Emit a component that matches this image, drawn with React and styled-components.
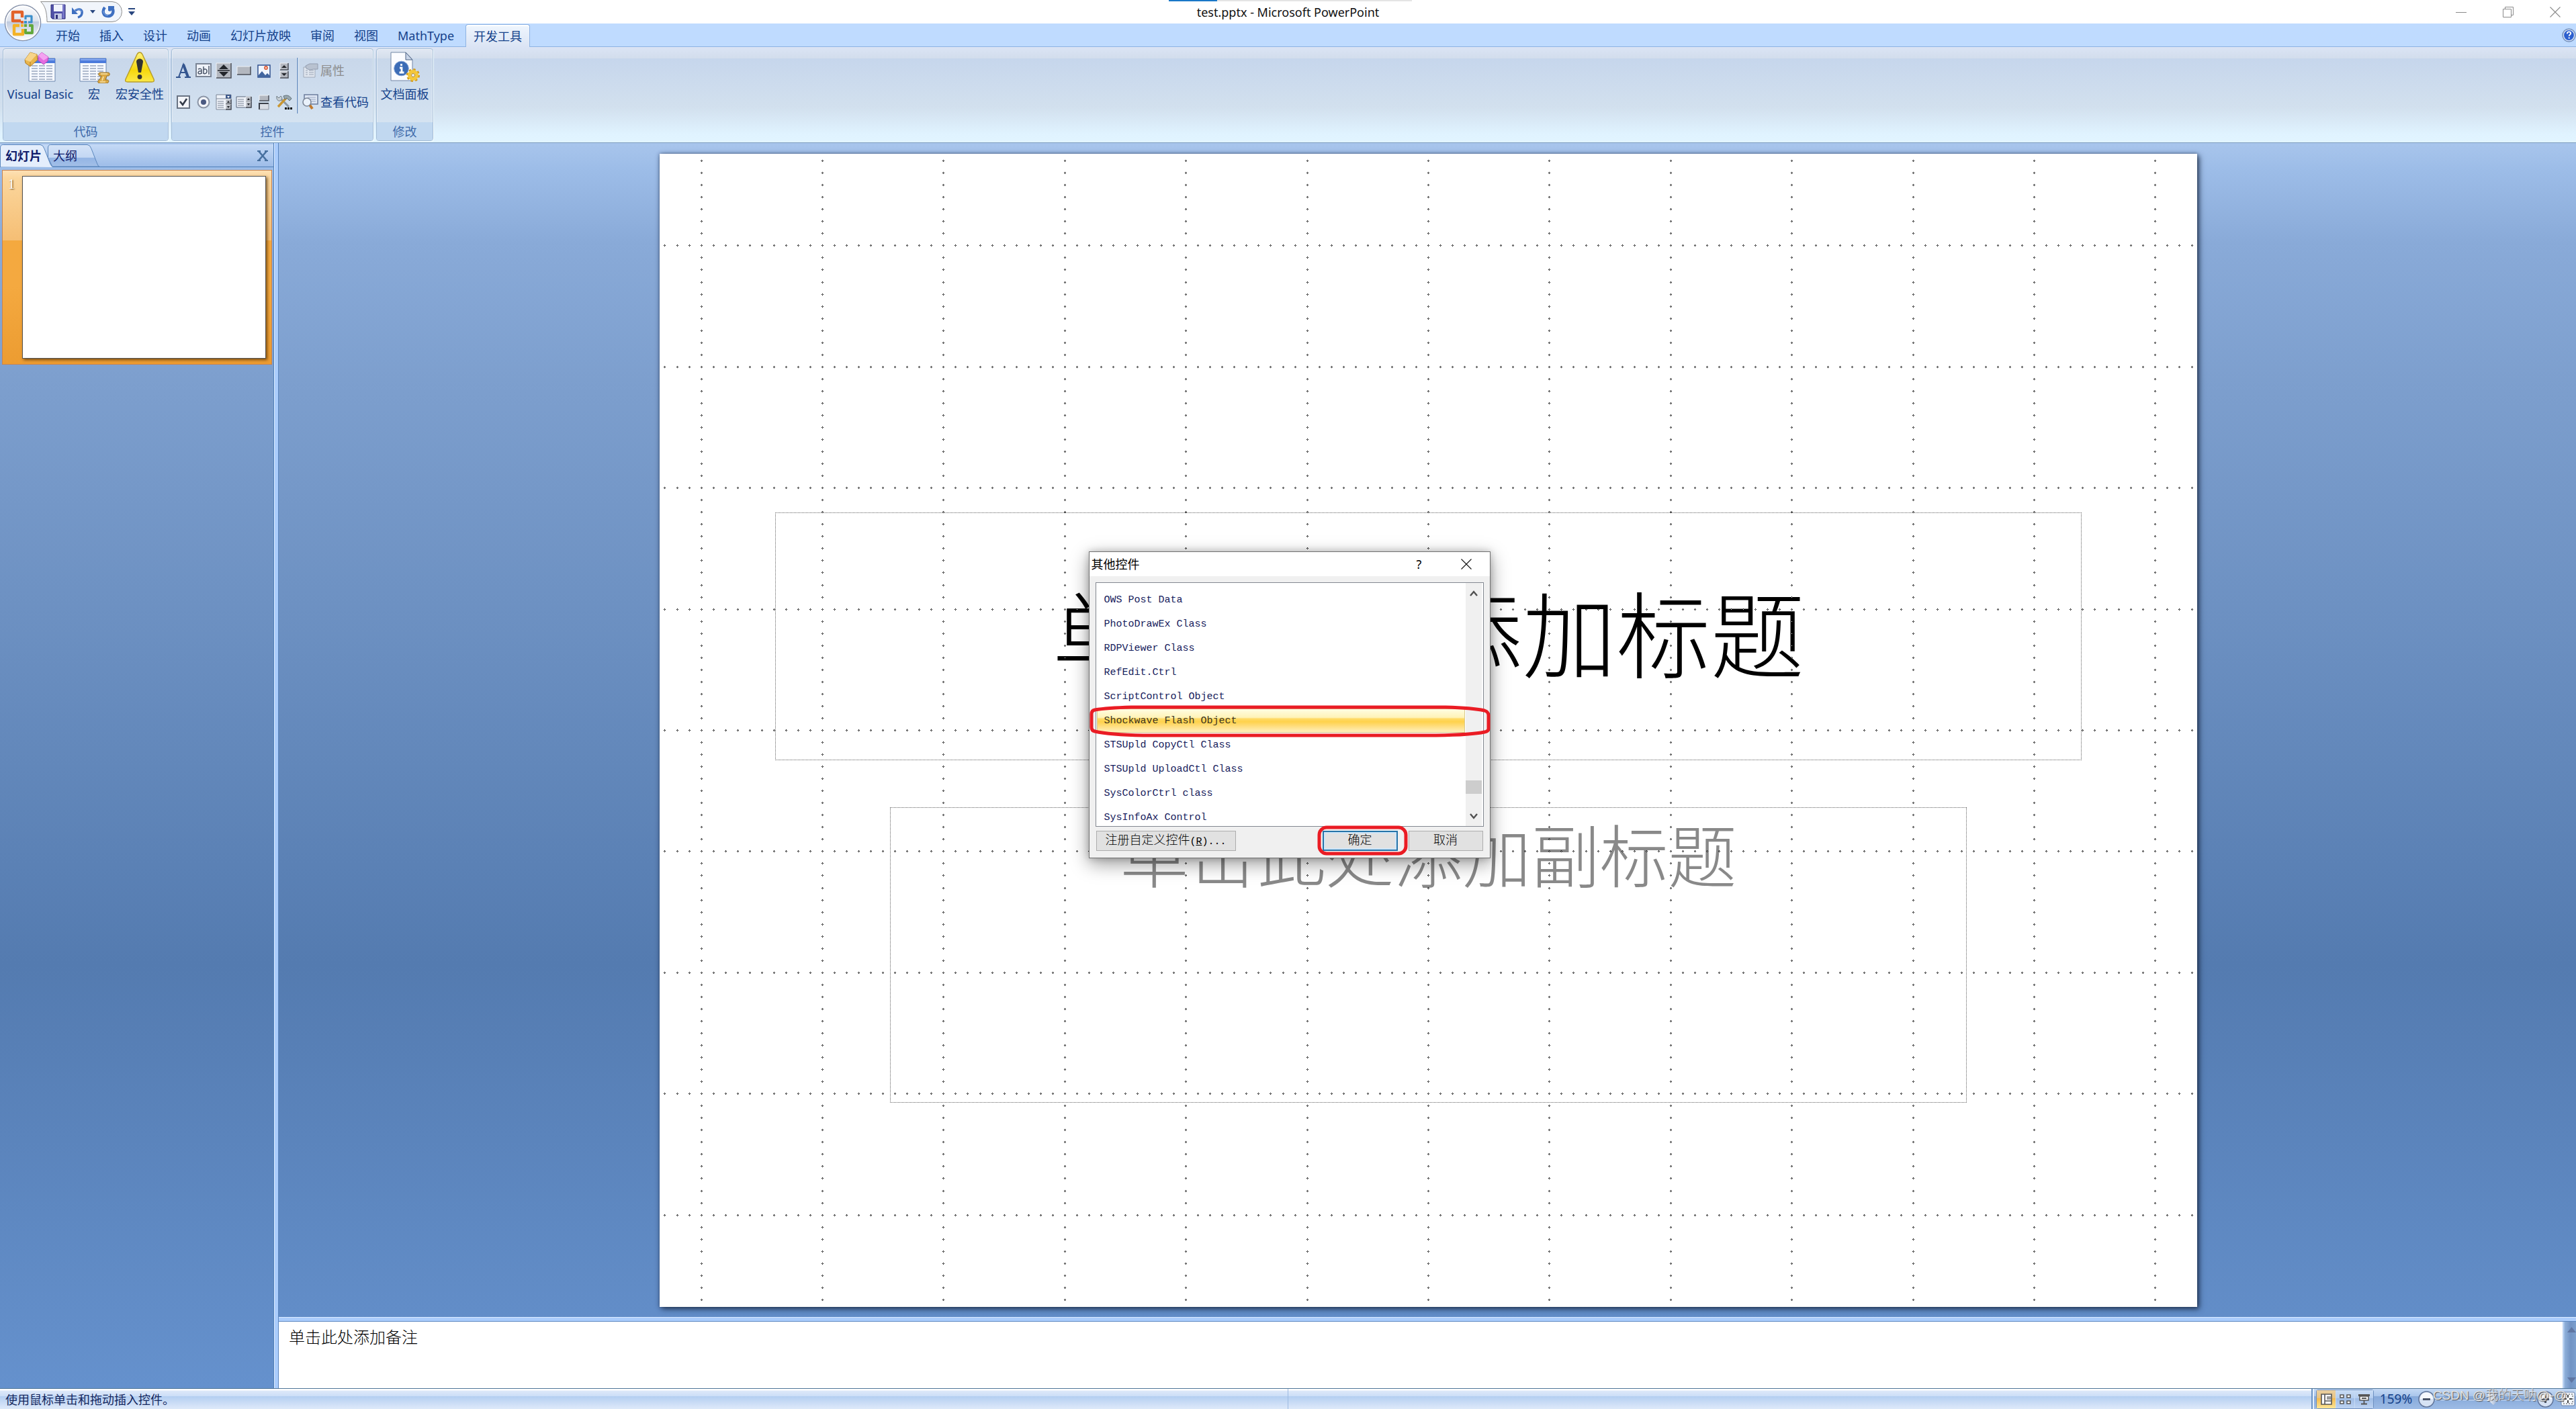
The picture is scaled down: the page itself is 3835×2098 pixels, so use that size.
import styled, { createGlobalStyle, css } from "styled-components";

const uiFont = `"Noto Sans", "Noto Sans CJK SC", sans-serif`;
const songFont = `"Liberation Serif", "Noto Sans CJK SC", serif`;
const monoFont = `"Liberation Mono", "Noto Sans CJK SC", monospace`;

const GlobalStyle = createGlobalStyle`
   * {
      box-sizing: border-box;
   }
   body {
      margin: 0;
      font-family: ${uiFont};
      font-size: 18px;
      line-height: 24px;
      color: #15428b;
      background: #fff;
   }
   button {
      font: inherit;
      color: inherit;
      border: 0;
      padding: 0;
      background: none;
   }
   svg {
      display: block;
      flex: none;
   }
`;

const Window = styled.div`
   position: relative;
   min-height: 100vh;
   display: flex;
   flex-direction: column;
   overflow: hidden;
`;

/* ---------- title bar ---------- */

const TitleBar = styled.header`
   height: 35px;
   display: grid;
   grid-template-columns: 1fr auto 1fr;
   align-items: center;
   color: #111;
`;

const QuickAccess = styled.div`
   margin-left: 60px;
   display: flex;
   align-items: center;
   gap: 9px;
`;

const QuickTools = styled.div`
   position: relative;
   width: 122px;
   height: 31px;
   padding-left: 15px;
   display: flex;
   align-items: center;
   gap: 9px;
`;

const QuickShape = styled.svg`
   position: absolute;
   left: 0;
   top: 0;
`;

const IconButton = styled.button`
   position: relative;
   display: flex;
   align-items: center;
   justify-content: center;
`;

const AppTitle = styled.h1`
   margin: 0;
   font-size: 18px;
   font-weight: 400;
   line-height: 34px;
`;

const WindowButtons = styled.div`
   display: flex;
   justify-content: flex-end;
   gap: 54px;
   padding-right: 23px;
`;

const LoadStrip = styled.div`
   position: absolute;
   top: 0;
   left: calc(50% - 178px);
   width: 362px;
   height: 2px;
   background: linear-gradient(90deg, #1a78c8 72px, #e4e4e4 72px);
`;

const OfficeButton = styled.button`
   position: absolute;
   left: 6px;
   top: 6px;
   z-index: 2;
`;

/* ---------- ribbon ---------- */

const TabStrip = styled.nav`
   height: 35px;
   padding: 1px 0 0 71px;
   display: flex;
   gap: 5px;
   background: #bfdbff;
   border-bottom: 1px solid #8db2e3;
`;

const RibbonTab = styled.button`
   height: 34px;
   padding: 0 12px;
   line-height: 32px;
   ${(p) =>
      p.$active &&
      css`
         background: linear-gradient(#eff6fe, #dbe4f4);
         border: 1px solid #8db2e3;
         border-bottom: 0;
         border-radius: 4px 4px 0 0;
         padding: 0 11px;
         box-shadow: inset 0 2px 1px #fff;
         line-height: 30px;
      `}
`;

const HelpButton = styled(IconButton)`
   margin-left: auto;
`;

const Ribbon = styled.section`
   height: 143px;
   padding: 2px 4px;
   display: flex;
   gap: 4px;
   background: linear-gradient(#dbe4f5, #d2ddec 17px, #c6d6ec 17px, #d2e0ee 90px, #e0f3ff 130px, #e2f5ff);
   border-bottom: 1px solid #7e9cbd;
`;

const Group = styled.section`
   display: flex;
   flex-direction: column;
   width: ${(p) => p.$width}px;
   height: 138px;
   border: 1px solid #a3bcd6;
   border-radius: 4px;
   box-shadow: inset 0 0 0 1px rgba(255, 255, 255, 0.45), 1px 1px 0 #f2fbff;
   background: linear-gradient(#e1e8f3, #d4deeb 14px, #c8d7ea 14px, #d8e6f3);
   overflow: hidden;
`;

const GroupBody = styled.div`
   flex: 1;
   display: flex;
   padding-left: ${(p) => p.$indent || 0}px;
`;

const GroupLabel = styled.h2`
   margin: 0;
   height: 27px;
   font-size: 18px;
   font-weight: 400;
   line-height: 28px;
   text-align: center;
   color: #3e6aaa;
   background: #c1d8f0;
`;

const BigButton = styled.button`
   width: ${(p) => p.$width}px;
   padding-top: 3px;
   display: flex;
   flex-direction: column;
   align-items: center;
   gap: 4px;
   white-space: nowrap;
`;

const ControlGrid = styled.div`
   display: grid;
   grid-template-columns: repeat(6, 30px);
   grid-auto-rows: 47px;
   padding-top: 8px;
`;

const Divider = styled.div`
   width: 2px;
   height: 83px;
   margin: 13px 6px 0 4px;
   background: #8aa8cf;
   box-shadow: 1px 0 0 #eef5fc;
`;

const SideCommands = styled.div`
   padding-top: 8px;
   display: grid;
   grid-auto-rows: 47px;
   align-items: center;
`;

const SideCommand = styled.button`
   display: flex;
   align-items: center;
   gap: 3px;
   white-space: nowrap;
   &:disabled {
      color: #8d8d8d;
   }
`;

/* ---------- work area ---------- */

const Workspace = styled.main`
   flex: 1;
   display: flex;
   background: linear-gradient(#a8c5ec, #9dbde8 2%, #89aad8 8%, #7c9ecd 20%, #547bb0 66%, #6591cd);
`;

const OutlinePane = styled.aside`
   width: 408px;
   border-right: 1px solid #4f7fb8;
   padding-top: 2px;
`;

const PaneTabs = styled.div`
   height: 34px;
   display: flex;
   background: linear-gradient(#c5daf6, #9dbce8);
   border-bottom: 1px solid #4f7fb8;
`;

const PaneTab = styled.button`
   position: relative;
   width: ${(p) => (p.$active ? 71 : 78)}px;
   padding-left: 8px;
   text-align: left;
   color: #101c6b;
   font-weight: ${(p) => (p.$active ? 700 : 400)};
   z-index: ${(p) => (p.$active ? 1 : 0)};
`;

const PaneTabShape = styled.svg`
   position: absolute;
   left: 0;
   top: 0;
   z-index: -1;
`;

const PaneClose = styled(IconButton)`
   margin-left: auto;
   padding-right: 8px;
`;

const Thumbnail = styled.button`
   display: flex;
   width: calc(100% - 5px);
   margin: 4px 2px 0 3px;
   padding: 8px;
   border: 1px solid #c98450;
   background: linear-gradient(#fde0b4, #fbd69c 12px, #f5be74 104px, #f4a93f 104px, #f4a940 60%, #ec9c31);
`;

const ThumbNumber = styled.span`
   width: 21px;
   flex: none;
   text-align: left;
   font-family: ${songFont};
   font-size: 20px;
   color: #fff;
   text-shadow: 1px 1px 2px #5b3d12;
`;

const ThumbPage = styled.span`
   flex: 1;
   aspect-ratio: 4 / 3;
   background: #fff;
   border: 1px solid #555;
   box-shadow: 2px 2px 4px rgba(70, 40, 0, 0.7);
`;

const Splitter = styled.div`
   width: 7px;
   background: #abcdfc;
   border-left: 1px solid #dcebff;
   border-right: 1px solid #5a86c0;
`;

const Editor = styled.section`
   flex: 1;
   min-width: 0;
   display: flex;
   flex-direction: column;
`;

const Stage = styled.div`
   flex: 1;
   padding: 16px 0 13px 3px;
   display: flex;
   justify-content: center;
   align-items: flex-start;
`;

const Slide = styled.article`
   position: relative;
   width: 67%;
   aspect-ratio: 4 / 3;
   background: #fff;
   box-shadow: 3px 3px 8px rgba(20, 35, 60, 0.8), 0 0 5px rgba(40, 60, 100, 0.6);
`;

const Placeholder = styled.div`
   position: absolute;
   border: 1px dotted #606060;
   text-align: center;
   white-space: nowrap;
   font-family: ${songFont};
   font-weight: 300;
`;

const TitlePlaceholder = styled(Placeholder)`
   left: 7.5%;
   right: 7.5%;
   top: 534px;
   height: 369px;
   padding-top: 8px;
   display: flex;
   align-items: center;
   justify-content: center;
   font-size: 140px;
   line-height: 168px;
   color: #000;
`;

const SubtitlePlaceholder = styled(Placeholder)`
   left: 15%;
   right: 15%;
   top: 973px;
   height: 440px;
   padding-top: 16px;
   font-size: 102px;
   line-height: 122px;
   color: #898989;
`;

const GridLayer = styled.svg`
   position: absolute;
   left: 0;
   top: 0;
   width: 100%;
   height: 100%;
`;

const NotesBar = styled.div`
   height: 7px;
   background: #abcdfc;
   border-top: 1px solid #dcebff;
   border-bottom: 1px solid #5a86c0;
`;

const Notes = styled.div`
   height: 99px;
   display: flex;
   background: #fff;
`;

const NotesText = styled.textarea`
   flex: 1;
   padding: 6px 15px;
   border: 0;
   outline: 0;
   resize: none;
   font-family: ${songFont};
   font-weight: 300;
   font-size: 24px;
   line-height: 36px;
   &::placeholder {
      color: #000;
      opacity: 1;
   }
`;

const NotesScroll = styled.div`
   width: 20px;
   padding: 8px 0;
   display: flex;
   flex-direction: column;
   justify-content: space-between;
   align-items: flex-end;
   background: linear-gradient(90deg, #b8d0f0 2px, #8fb0da 3px, #7193c4 12px, #7b9fce);
`;

/* ---------- status bar ---------- */

const StatusBar = styled.footer`
   height: 31px;
   display: flex;
   color: #15285f;
   border-top: 1px solid #4d7497;
   background: linear-gradient(#fff 2px, #dde8f9 3px, #ccdef7 11px, #b3cef1 11px, #d6e4f8 26px, #dde9f9);
`;

const StatusText = styled.div`
   width: 50%;
   padding-left: 8px;
   line-height: 32px;
   border-right: 1px solid #9dbae2;
`;

const StatusTools = styled.div`
   margin-left: auto;
   display: flex;
   align-items: center;
   padding-left: 5px;
   border-left: 2px solid #6a93c4;
   box-shadow: inset 2px 0 0 #e7f1ff;
   background: linear-gradient(#c4d9f5, #a9c5ea 11px, #86a9da 11px, #9dbbe5);
`;

const ViewButtons = styled.div`
   height: 29px;
   display: flex;
   border: 1px solid #6e90c0;
   border-radius: 3px;
`;

const ViewButton = styled(IconButton)`
   width: 28px;
   background: ${(p) =>
      p.$active
         ? "linear-gradient(#e9cfa3, #e9c37f 12px, #f3b94e 12px, #fbe596)"
         : "linear-gradient(#c9dcf5, #b4cdef 12px, #9dbbe5 12px, #bdd3f2)"};
   & + & {
      border-left: 1px solid #c5daf5;
   }
`;

const ZoomValue = styled.button`
   width: 50px;
   margin: 0 8px;
   font-size: 19px;
   color: #15428b;
`;

const ZoomSlider = styled.input`
   appearance: none;
   width: 152px;
   height: 20px;
   margin: 0;
   background: linear-gradient(#5d80b4, #5d80b4) center / 100% 1px no-repeat,
      linear-gradient(#e6f0ff, #e6f0ff) 0 11px / 100% 1px no-repeat;
   &::-webkit-slider-thumb {
      appearance: none;
      width: 15px;
      height: 18px;
      background: linear-gradient(90deg, #fff, #8ea6cb);
      clip-path: polygon(0 0, 100% 0, 100% 60%, 50% 100%, 0 60%);
   }
`;

const FitButton = styled(IconButton)`
   margin: 0 1px 0 10px;
`;

const Watermark = styled.span`
   position: absolute;
   right: 14px;
   bottom: 8px;
   font-family: "Liberation Sans", "Noto Sans CJK SC", sans-serif;
   font-weight: 300;
   font-size: 19px;
   line-height: 24px;
   color: #e2e2e2;
   text-shadow: 1px 1px 1px #555;
   pointer-events: none;
`;

/* ---------- dialog ---------- */

const Dialog = styled.section`
   position: absolute;
   left: calc(50% - 297px);
   top: 821px;
   width: 598px;
   color: #000;
   background: #f0f0f0;
   border: 1px solid #707070;
   box-shadow: 0 8px 26px rgba(0, 0, 0, 0.4), 0 0 10px rgba(0, 0, 0, 0.2);
`;

const DialogHeader = styled.header`
   height: 36px;
   padding: 0 27px 0 3px;
   display: flex;
   align-items: center;
   background: #fff;
`;

const DialogTitle = styled.h2`
   flex: 1;
   margin: 0;
   font-size: 18px;
   font-weight: 400;
`;

const DialogHelp = styled.button`
   width: 20px;
   margin-right: 52px;
`;

const DialogBody = styled.div`
   padding: 9px 9px 10px;
`;

const ListFrame = styled.div`
   height: 364px;
   display: flex;
   border: 1px solid #828790;
   background: #fff;
   overflow: hidden;
`;

const ControlList = styled.ul`
   flex: 1;
   margin: 0;
   padding: 7px 1px 0;
   list-style: none;
   font-family: ${monoFont};
   font-size: 15px;
   line-height: 34px;
`;

const ControlItem = styled.li`
   height: 36px;
   padding: 2px 0 0 11px;
   color: #15205c;
   ${(p) =>
      p.$selected &&
      css`
         color: #3b3420;
         padding: 1px 0 0 10px;
         border: 1px solid #d9c98a;
         background: linear-gradient(#fffde2, #fff3b8 36%, #ffda66 42%, #ffd24c 55%, #ffdc78 72%, #fff0bd);
      `}
`;

const ScrollBar = styled.div`
   width: 24px;
   margin-right: 2px;
   display: flex;
   flex-direction: column;
   align-items: center;
   padding: 10px 0 9px;
   background: #f0f0f0;
`;

const ScrollTrack = styled.div`
   flex: 1;
   width: 100%;
   display: flex;
   flex-direction: column;
   justify-content: flex-end;
   padding-bottom: 29px;
`;

const ScrollThumb = styled.div`
   height: 20px;
   background: #cdcdcd;
`;

const DialogButtons = styled.div`
   margin-top: 6px;
   display: flex;
   align-items: center;
   padding: 0 1px;
`;

const DialogButton = styled.button`
   height: 30px;
   width: ${(p) => p.$width}px;
   border: 1px solid #adadad;
   background: #e1e1e1;
   font-family: ${monoFont};
   font-size: 18px;
   font-weight: 300;
   line-height: 28px;
   white-space: nowrap;
   ${(p) =>
      p.$primary &&
      css`
         margin: 0 16px 0 auto;
         border: 2px solid #2573a8;
         box-shadow: inset 0 0 0 2px #cfe6f8;
         line-height: 26px;
      `}
   span {
      font-size: 15px;
   }
`;

const RowMark = styled.svg`
   position: absolute;
   left: 0;
   top: 226px;
   pointer-events: none;
`;

const OkMark = styled.svg`
   position: absolute;
   left: 338px;
   top: 406px;
   pointer-events: none;
`;

/* ---------- icons ---------- */

const OfficeLogo = () => (
   <svg width="56" height="56" viewBox="0 0 56 56">
      <defs>
         <linearGradient id="orb" x1="0" y1="0" x2="0" y2="1">
            <stop offset="0" stopColor="#fdfdfe" />
            <stop offset=".45" stopColor="#dde3ee" />
            <stop offset=".47" stopColor="#bfcade" />
            <stop offset="1" stopColor="#ffffff" />
         </linearGradient>
      </defs>
      <circle cx="28" cy="28" r="26.5" fill="url(#orb)" stroke="#8792aa" strokeWidth="1.6" />
      <circle cx="28" cy="28" r="25" fill="none" stroke="#fff" strokeWidth="1.4" />
      <g fill="none" strokeLinejoin="round">
         <path d="M25 25H13V12h14v8" stroke="#e2622a" strokeWidth="4.4" />
         <path d="M32 23v-5h9v9h-5" stroke="#3c8fcb" strokeWidth="3.2" />
         <path d="M23 32h-8v13h13v-8" stroke="#f3b227" strokeWidth="4.4" />
         <path d="M37 32h5v11H32v-6" stroke="#62a83c" strokeWidth="3.8" />
      </g>
      <path d="M25 25h4v4h-4z" fill="#e2622a" />
      <path d="M30 25h4v4h-4z" fill="#3c8fcb" />
      <path d="M25 30h4v4h-4z" fill="#f3b227" />
      <path d="M30 30h4v4h-4z" fill="#62a83c" />
   </svg>
);

const SaveIcon = () => (
   <svg width="23" height="23" viewBox="0 0 23 23">
      <path d="M1 1h21v21H3l-2-2z" fill="#5151a8" stroke="#30307c" />
      <path d="M5 1h13v10H5z" fill="#f1f4fd" />
      <path d="M18 1h3v20h-3z" fill="#7676c8" />
      <path d="M6 14h11v8H6z" fill="#c6cbe6" />
      <path d="M8 16h3v6H8z" fill="#30307c" />
   </svg>
);

const UndoIcon = () => (
   <svg width="18" height="20" viewBox="0 0 18 20">
      <path d="M5 8c6-5 11-1 10 4-.5 3-3 5-6 6" fill="none" stroke="#3e6fc0" strokeWidth="3.4" />
      <path d="M0 3v10h9z" fill="#3e6fc0" />
      <path d="M6 6c4-2 8 0 8 4" fill="none" stroke="#8db4ee" />
   </svg>
);

const RedoIcon = () => (
   <svg width="20" height="20" viewBox="0 0 20 20">
      <path d="M5 3c-4 5-3 13 5 13 7 0 9-7 6-12" fill="none" stroke="#3e6fc0" strokeWidth="4.4" />
      <path d="M10 1h9v3l-6 5-3-1z" fill="#3e6fc0" />
      <path d="M3 8c0 5 3 7 7 7" fill="none" stroke="#8db4ee" />
   </svg>
);

const DownArrow = () => (
   <svg width="8" height="5" viewBox="0 0 8 5">
      <path d="M0 0h8L4 5z" fill="#29477f" />
   </svg>
);

const CustomizeIcon = () => (
   <svg width="10" height="11" viewBox="0 0 10 11">
      <path d="M0 0h10v2H0zM0 5h10L5 11z" fill="#29477f" />
   </svg>
);

const CrossIcon = ({ size, color }) => (
   <svg width={size} height={size} viewBox="0 0 16 16">
      <path d="M.5.5l15 15M15.5.5l-15 15" stroke={color} strokeWidth="1.1" />
   </svg>
);

const HelpIcon = () => (
   <svg width="21" height="21" viewBox="0 0 21 21">
      <circle cx="10.5" cy="10.5" r="9.5" fill="#dbe6f8" stroke="#7691bd" strokeWidth="1.5" />
      <circle cx="10.5" cy="10.5" r="7.4" fill="#2c5fce" />
      <path d="M7.8 8.3c0-4 5.8-3.700 5.4-.4-.2 1.600-2.500 1.800-2.500 3.900M10.700 13.500v2" stroke="#fff" strokeWidth="1.9" fill="none" />
   </svg>
);

const Sheet = () => (
   <g>
      <path d="M0 0h39v34H0z" fill="#f6f9ff" stroke="#6d87ae" />
      <path d="M0 0h39v7H0z" fill="#4c7bdc" />
      <path d="M1 1h37v2H1z" fill="#86a9f0" />
      <path
         d="M4 11h9M15 11h9M26 11h9M4 15h9M15 15h9M26 15h9M4 19h9M15 19h9M26 19h9M4 23h9M15 23h9M26 23h9M4 27h9M15 27h9M26 27h9M4 31h9M15 31h9M26 31h9"
         stroke="#98a5bd"
         strokeWidth="1.5"
      />
   </g>
);

const VisualBasicIcon = () => (
   <svg width="48" height="48" viewBox="0 0 48 48">
      <g transform="translate(7 11)">
         <Sheet />
      </g>
      <path d="M1 13L9 2l10 3 1 8-11 10-7-5z" fill="#e9b54c" stroke="#b07c24" />
      <path d="M9 2l10 3-10 11-8-3z" fill="#f7d48a" />
      <path d="M9 16v7" stroke="#b07c24" fill="none" />
      <path d="M21 7l5-5 10 7-1 6-6 5-8-6z" fill="#e46be0" stroke="#b144b4" />
      <path d="M26 2l10 7-7 5-8-7z" fill="#f4a2f1" />
   </svg>
);

const MacroIcon = () => (
   <svg width="48" height="48" viewBox="0 0 48 48">
      <g transform="translate(3 11)">
         <Sheet />
      </g>
      <path d="M33 32h12c3 0 3 5 0 5h-2l-2 6h3c3 0 2 5-1 5H32c-3 0-3-5 0-5l3-6h-2c-3 0-3-5 0-5z" fill="#dba945" stroke="#94702a" />
      <path d="M34 34h10M38 38l-2 6M33 46h8" stroke="#fbe6ab" strokeWidth="1.6" />
   </svg>
);

const WarningIcon = () => (
   <svg width="48" height="48" viewBox="0 0 48 48">
      <defs>
         <linearGradient id="warn" x1="0" y1="0" x2="0" y2="1">
            <stop offset="0" stopColor="#fff27a" />
            <stop offset=".6" stopColor="#f6d80c" />
            <stop offset="1" stopColor="#fbe94a" />
         </linearGradient>
      </defs>
      <path d="M24 2c2 0 3 1 4 3l17 37c1 3 0 4-3 4H6c-3 0-4-1-3-4L20 5c1-2 2-3 4-3z" fill="url(#warn)" stroke="#b79d2c" strokeWidth="1.5" />
      <path d="M19 16c0-6 10-6 10 0l-3 16h-4z" fill="#333" />
      <circle cx="24" cy="38.5" r="3.4" fill="#333" />
   </svg>
);

const DocPanelIcon = () => (
   <svg width="48" height="48" viewBox="0 0 48 48">
      <path d="M3 2h22l10 11v31H3z" fill="#fbfcff" stroke="#7286a6" />
      <path d="M25 2v11h10z" fill="#c9d5e8" stroke="#4d6283" />
      <circle cx="18.5" cy="26" r="10.8" fill="#3c6cb6" stroke="#86a5d6" />
      <path d="M18.5 19v3M16 25h3v7M15.5 32h7" stroke="#fff" strokeWidth="2.8" fill="none" />
      <circle cx="36" cy="36" r="8" fill="none" stroke="#d29a18" strokeWidth="4" strokeDasharray="3.2 3.08" />
      <circle cx="36" cy="36" r="5.5" fill="none" stroke="#f4c73a" strokeWidth="5" />
      <circle cx="36" cy="36" r="2.5" fill="#e8eef8" stroke="#b98716" />
   </svg>
);

const ControlSvg = ({ children }) => (
   <svg width="24" height="24" viewBox="0 0 24 24">
      {children}
   </svg>
);

const Raised = ({ x, y, w, h }) => (
   <g>
      <rect x={x} y={y} width={w} height={h} fill="#b3b7bf" />
      <path d={`M${x} ${y + h}V${y}h${w}`} stroke="#f0f2f5" fill="none" />
      <path d={`M${x} ${y + h}h${w}V${y}`} stroke="#4b4f58" strokeWidth="1.5" fill="none" />
   </g>
);

const LabelIcon = () => (
   <ControlSvg>
      <path d="M1 22h7M14 22h9M5 22L12 3l7 19M8 15h9" stroke="#34558f" strokeWidth="2" fill="none" />
      <path d="M12 3l7 19" stroke="#34558f" strokeWidth="4" />
   </ControlSvg>
);

const TextBoxIcon = () => (
   <ControlSvg>
      <path d="M1 2h22v19H1z" fill="#eef2f9" stroke="#7a8495" strokeWidth="2" />
      <path d="M4 10c4-2 5 0 5 2v5M9 13c-6-1-6 4-3 4 2 0 3-1 3-2M12 6v11M12 12c0-3 5-3 5 1s-5 5-5 2M20 5v13" stroke="#4b5568" strokeWidth="1.5" fill="none" />
   </ControlSvg>
);

const SpinIcon = () => (
   <ControlSvg>
      <Raised x={1} y={1} w={22} h={22} />
      <path d="M12 3l7 7H5zM12 21l7-7H5z" fill="#22252b" />
      <path d="M3 12h18" stroke="#22252b" strokeWidth="1.5" />
   </ControlSvg>
);

const ButtonIcon = () => (
   <ControlSvg>
      <Raised x={2} y={6} w={20} h={12} />
   </ControlSvg>
);

const ImageIcon = () => (
   <ControlSvg>
      <path d="M3 4h18v18H3z" fill="#f1f5fd" stroke="#2f4f8e" strokeWidth="1.5" />
      <path d="M3 20l6-7 5 6 3-3 4 4v2H3z" fill="#41659f" />
      <circle cx="15" cy="8" r="2.2" fill="#f7c5b4" stroke="#d8532e" strokeWidth="1.4" />
   </ControlSvg>
);

const ScrollBarIcon = () => (
   <ControlSvg>
      <Raised x={6} y={1} w={12} h={10} />
      <Raised x={6} y={13} w={12} h={10} />
      <path d="M12 4l4 4H8zM12 20l4-4H8z" fill="#22252b" />
   </ControlSvg>
);

const CheckIcon = () => (
   <ControlSvg>
      <path d="M3 3h18v18H3z" fill="#f3f5fa" stroke="#6a7484" strokeWidth="2" />
      <path d="M7 11l4 5 6-9" stroke="#333a48" strokeWidth="2.6" fill="none" />
   </ControlSvg>
);

const RadioIcon = () => (
   <ControlSvg>
      <circle cx="12" cy="12" r="8.5" fill="#f2f4f9" stroke="#8b95a6" strokeWidth="2" />
      <circle cx="12" cy="12" r="4" fill="#4b5a82" />
   </ControlSvg>
);

const ComboIcon = () => (
   <ControlSvg>
      <path d="M1 1h22v22H1z" fill="#eef2f9" stroke="#7a8495" />
      <path d="M15 1h8v6h-8z" fill="#3f5a8c" />
      <path d="M17 3l2 3 2-3z" fill="#fff" />
      <path d="M1 7h22M3 11h9M3 14h9M3 17h9M3 20h9" stroke="#7a8495" />
      <Raised x={15} y={8} w={8} h={7} />
      <Raised x={15} y={16} w={8} h={7} />
      <path d="M19 10l2 3h-4zM19 21l2-3h-4z" fill="#22252b" />
   </ControlSvg>
);

const ListIcon = () => (
   <ControlSvg>
      <path d="M1 4h22v16H1z" fill="#eef2f9" stroke="#59657a" />
      <path d="M3 8h9M3 11h9M3 14h9M3 17h9" stroke="#7a8495" />
      <Raised x={15} y={4} w={8} h={8} />
      <Raised x={15} y={12} w={8} h={8} />
      <path d="M19 6l2 3h-4zM19 17l2-3h-4z" fill="#22252b" />
   </ControlSvg>
);

const ToggleIcon = () => (
   <ControlSvg>
      <Raised x={5} y={2} w={14} h={8} />
      <path d="M5 14h14v9H5z" fill="#d9dde5" />
      <path d="M5 23v-9h14" stroke="#3c414b" strokeWidth="2" fill="none" />
      <path d="M5 23h14v-9" stroke="#8d939f" fill="none" />
   </ControlSvg>
);

const MoreIcon = () => (
   <ControlSvg>
      <path d="M6 6l13 13" stroke="#8b98a2" strokeWidth="3" />
      <path d="M3 19L15 6" stroke="#c99733" strokeWidth="3.4" />
      <path d="M11 3c5-2 9-1 12 4l-3 3-4-4-3 2z" fill="#98a7ae" stroke="#5f6e76" />
      <path d="M1 3l3 3 3-3c3 2 2 6-1 7S0 8 1 3z" fill="#c8d0d6" stroke="#6d7a83" />
      <path d="M13 20h3v3h-3zM17 20h3v3h-3zM21 20h3v3h-3z" fill="#000" />
   </ControlSvg>
);

const PropertiesIcon = () => (
   <ControlSvg>
      <path d="M2 7h17v15H2z" fill="#dfe5ee" stroke="#a0a9b8" />
      <path d="M5 12h3M10 12h7M5 15h3M10 15h7M5 18h3M10 18h7" stroke="#9aa4b5" />
      <path d="M5 5l6-3h12v8h-6l-6 1-5-2z" fill="#b9c2d0" stroke="#939daf" />
   </ControlSvg>
);

const ViewCodeIcon = () => (
   <ControlSvg>
      <path d="M3 1h20v14H3z" fill="#dfe7f4" stroke="#6b7c9c" strokeWidth="1.5" />
      <path d="M8 5h12M10 8h10M12 11h8" stroke="#98a7c2" />
      <path d="M11 16l4 6" stroke="#c27a2c" strokeWidth="4" />
      <circle cx="7" cy="12" r="6" fill="#e9f1fb" stroke="#7b8697" strokeWidth="1.6" />
   </ControlSvg>
);

const NormalViewIcon = () => (
   <svg width="17" height="17" viewBox="0 0 17 17">
      <path d="M1 1h15v15H1z" fill="#fff" stroke="#555" strokeWidth="1.6" />
      <path d="M6 1v15M6 11h10" stroke="#555" strokeWidth="1.6" />
      <path d="M9 4h6v5H9z" fill="#9a9a9a" />
   </svg>
);

const SorterIcon = () => (
   <svg width="17" height="17" viewBox="0 0 17 17">
      <path d="M1 2h5v4H1zM11 2h5v4h-5zM1 11h5v4H1zM11 11h5v4h-5z" fill="#fff" stroke="#555" strokeWidth="1.5" />
   </svg>
);

const ShowIcon = () => (
   <svg width="17" height="17" viewBox="0 0 17 17">
      <path d="M0 1h17v3H0z" fill="#555" />
      <path d="M2 4h13v6H2z" fill="#fff" stroke="#555" strokeWidth="1.5" />
      <path d="M5 7h7M8.5 10v5M4 15.5h9" stroke="#555" strokeWidth="1.8" />
   </svg>
);

const ZoomIcon = ({ plus }) => (
   <svg width="25" height="25" viewBox="0 0 25 25">
      <circle cx="12.5" cy="12.5" r="11.5" fill="#d6e2f4" stroke="#5f7399" strokeWidth="1.5" />
      <path d="M3 12a9.5 9.5 0 0 1 19 0z" fill="#f6f9fe" />
      <path d={plus ? "M7 12.5h11M12.5 7v11" : "M7 12.5h11"} stroke="#4a5468" strokeWidth="3" />
   </svg>
);

const FitIcon = () => (
   <svg width="22" height="22" viewBox="0 0 22 22">
      <rect x="1" y="1" width="20" height="20" rx="2" fill="#f3f7fd" stroke="#6a82aa" />
      <path d="M4 4h14v14H4z" fill="none" stroke="#444" strokeDasharray="2 2" />
      <path d="M11 5v4M11 13v4M5 11h4M13 11h4" stroke="#444" strokeWidth="2" />
   </svg>
);

const Chevron = ({ down }) => (
   <svg width="14" height="10" viewBox="0 0 14 10">
      <path d={down ? "M2 1l5 6 5-6" : "M2 9l5-6 5 6"} fill="none" stroke="#505050" strokeWidth="2.4" />
   </svg>
);

const ScrollArrow = ({ down }) => (
   <svg width="13" height="8" viewBox="0 0 13 8">
      <path d={down ? "M0 0h13L6.5 8z" : "M0 8h13L6.5 0z"} fill="#5f76a3" />
   </svg>
);

/* ---------- data ---------- */

const tabs = ["开始", "插入", "设计", "动画", "幻灯片放映", "审阅", "视图", "MathType", "开发工具"];

const formControls = [
   { label: "标签", Icon: LabelIcon },
   { label: "文本框", Icon: TextBoxIcon },
   { label: "数值调节钮", Icon: SpinIcon },
   { label: "命令按钮", Icon: ButtonIcon },
   { label: "图像", Icon: ImageIcon },
   { label: "滚动条", Icon: ScrollBarIcon },
   { label: "复选框", Icon: CheckIcon },
   { label: "选项按钮", Icon: RadioIcon },
   { label: "组合框", Icon: ComboIcon },
   { label: "列表框", Icon: ListIcon },
   { label: "切换按钮", Icon: ToggleIcon },
   { label: "其他控件", Icon: MoreIcon },
];

const controls = [
   "OWS Post Data",
   "PhotoDrawEx Class",
   "RDPViewer Class",
   "RefEdit.Ctrl",
   "ScriptControl Object",
   "Shockwave Flash Object",
   "STSUpld CopyCtl Class",
   "STSUpld UploadCtl Class",
   "SysColorCtrl class",
   "SysInfoAx Control",
];

// grid lines run outwards from the slide centre, ten dots to a cell
const DOT = 18.04;
const CENTER_X = 1144;
const CENTER_Y = 858;

const gridDots = () => {
   const dots = new Set();
   for (let i = -6; i <= 6; i++) {
      for (let j = -47; j <= 47; j++) dots.add(`${Math.round(CENTER_X + i * 10 * DOT)} ${Math.round(CENTER_Y + j * DOT)}`);
   }
   for (let j = -4; j <= 4; j++) {
      for (let i = -63; i <= 63; i++) dots.add(`${Math.round(CENTER_X + i * DOT)} ${Math.round(CENTER_Y + j * 10 * DOT)}`);
   }
   return [...dots];
};

const dots = gridDots();
const dotCenters = dots.map((d) => `M${d}h1v1h-1z`).join("");
const dotEdges = dots.map((d) => `M${d}m0-1h1v1h-1zm-1 1h1v1h-1zm2 0h1v1h-1zm-1 1h1v1h-1z`).join("");

const SlideGrid = () => (
   <GridLayer shapeRendering="crispEdges">
      <path d={dotCenters} fill="#fff" />
      <path d={dotEdges} fill="#000" />
   </GridLayer>
);

/* ---------- sections ---------- */

const Header = () => (
   <>
      <LoadStrip />
      <OfficeButton aria-label="Office">
         <OfficeLogo />
      </OfficeButton>
      <TitleBar>
         <QuickAccess>
            <QuickTools>
               <QuickShape width="122" height="31" viewBox="0 0 122 31">
                  <path d="M.5.5H107a14.5 15 0 0 1 0 30H10C10 16 7 6 .5.5z" fill="#f1f5fb" stroke="#8e8e8e" />
               </QuickShape>
               <IconButton aria-label="保存"><SaveIcon /></IconButton>
               <IconButton aria-label="撤消"><UndoIcon /></IconButton>
               <IconButton aria-label="撤消列表"><DownArrow /></IconButton>
               <IconButton aria-label="重复"><RedoIcon /></IconButton>
            </QuickTools>
            <IconButton aria-label="自定义快速访问工具栏"><CustomizeIcon /></IconButton>
         </QuickAccess>
         <AppTitle>test.pptx - Microsoft PowerPoint</AppTitle>
         <WindowButtons>
            <IconButton aria-label="最小化">
               <svg width="16" height="16"><path d="M0 8.5h16" stroke="#8a8a8a" /></svg>
            </IconButton>
            <IconButton aria-label="还原">
               <svg width="16" height="16">
                  <path d="M.5 3.5h12v12H.5zM3.5 3.5v-3h12v12h-3" fill="none" stroke="#8a8a8a" />
               </svg>
            </IconButton>
            <IconButton aria-label="关闭"><CrossIcon size={16} color="#8a8a8a" /></IconButton>
         </WindowButtons>
      </TitleBar>
      <TabStrip>
         {tabs.map((tab) => (
            <RibbonTab key={tab} $active={tab === "开发工具"}>{tab}</RibbonTab>
         ))}
         <HelpButton aria-label="帮助"><HelpIcon /></HelpButton>
      </TabStrip>
      <Ribbon>
         <Group $width={247}>
            <GroupBody $indent={4}>
               <BigButton $width={102}><VisualBasicIcon />Visual Basic</BigButton>
               <BigButton $width={58}><MacroIcon />宏</BigButton>
               <BigButton $width={78}><WarningIcon />宏安全性</BigButton>
            </GroupBody>
            <GroupLabel>代码</GroupLabel>
         </Group>
         <Group $width={301}>
            <GroupBody $indent={2}>
               <ControlGrid>
                  {formControls.map(({ label, Icon }) => (
                     <IconButton key={label} aria-label={label}><Icon /></IconButton>
                  ))}
               </ControlGrid>
               <Divider />
               <SideCommands>
                  <SideCommand disabled><PropertiesIcon />属性</SideCommand>
                  <SideCommand><ViewCodeIcon />查看代码</SideCommand>
               </SideCommands>
            </GroupBody>
            <GroupLabel>控件</GroupLabel>
         </Group>
         <Group $width={85}>
            <GroupBody>
               <BigButton $width={83}><DocPanelIcon />文档面板</BigButton>
            </GroupBody>
            <GroupLabel>修改</GroupLabel>
         </Group>
      </Ribbon>
   </>
);

const Outline = () => (
   <OutlinePane>
      <PaneTabs>
         <PaneTab $active>
            <PaneTabShape width="80" height="34">
               <path d="M.5 34V5q0-4.500 4-4.500H60q4 0 6 6l9 23q2 4 5 5z" fill="#e4eefc" stroke="#5b87bd" />
            </PaneTabShape>
            幻灯片
         </PaneTab>
         <PaneTab>
            <PaneTabShape width="80" height="34">
               <defs>
                  <linearGradient id="tab" x1="0" y1="0" x2="0" y2="1">
                     <stop offset="0" stopColor="#d5e4f8" />
                     <stop offset=".58" stopColor="#c3d7f3" />
                     <stop offset=".6" stopColor="#94b5e4" />
                     <stop offset="1" stopColor="#a2bfe8" />
                  </linearGradient>
               </defs>
               <path d="M.5 20V5q0-4.500 4-4.500H59q4 0 6 6l9 23q1 3 3 3.500H7z" fill="url(#tab)" stroke="#5b87bd" />
            </PaneTabShape>
            大纲
         </PaneTab>
         <PaneClose aria-label="关闭窗格">
            <svg width="16" height="16" viewBox="0 0 16 16">
               <path d="M0 1h5M11 1h5M0 15h5M11 15h5" stroke="#47709f" strokeWidth="2" />
               <path d="M2 1l12 14M14 1L2 15" stroke="#47709f" strokeWidth="2.6" />
            </svg>
         </PaneClose>
      </PaneTabs>
      <Thumbnail aria-label="幻灯片 1">
         <ThumbNumber>1</ThumbNumber>
         <ThumbPage />
      </Thumbnail>
   </OutlinePane>
);

const SlideEditor = () => (
   <Editor>
      <Stage>
         <Slide>
            <TitlePlaceholder>单击此处添加标题</TitlePlaceholder>
            <SubtitlePlaceholder>单击此处添加副标题</SubtitlePlaceholder>
            <SlideGrid />
         </Slide>
      </Stage>
      <NotesBar />
      <Notes>
         <NotesText aria-label="备注" placeholder="单击此处添加备注" />
         <NotesScroll>
            <ScrollArrow />
            <ScrollArrow down />
         </NotesScroll>
      </Notes>
   </Editor>
);

const ControlsDialog = () => (
   <Dialog role="dialog" aria-labelledby="dialog-title">
      <DialogHeader>
         <DialogTitle id="dialog-title">其他控件</DialogTitle>
         <DialogHelp>?</DialogHelp>
         <IconButton aria-label="关闭"><CrossIcon size={16} color="#111" /></IconButton>
      </DialogHeader>
      <DialogBody>
         <ListFrame>
            <ControlList role="listbox" aria-labelledby="dialog-title">
               {controls.map((name) => {
                  const selected = name === "Shockwave Flash Object";
                  return (
                     <ControlItem key={name} role="option" aria-selected={selected} $selected={selected}>
                        {name}
                     </ControlItem>
                  );
               })}
            </ControlList>
            <ScrollBar>
               <Chevron />
               <ScrollTrack><ScrollThumb /></ScrollTrack>
               <Chevron down />
            </ScrollBar>
         </ListFrame>
         <DialogButtons>
            <DialogButton $width={208}>注册自定义控件<span>(<u>R</u>)...</span></DialogButton>
            <DialogButton $width={112} $primary>确定</DialogButton>
            <DialogButton $width={111}>取消</DialogButton>
         </DialogButtons>
      </DialogBody>
      <RowMark width="598" height="52" viewBox="0 0 598 52">
         <path
            d="M62 5H530q40 1 58 5 6 2 6 7v20q0 4-6 5-18 4-72 5H80q-50-1-72-6-5-1-5-6V15q0-5 5-6 18-3 54-4z"
            fill="none"
            stroke="#ea1c24"
            strokeWidth="5"
         />
      </RowMark>
      <OkMark width="138" height="47" viewBox="0 0 138 47">
         <rect x="4" y="4" width="129" height="39" rx="11" fill="none" stroke="#ea1c24" strokeWidth="5" />
      </OkMark>
   </Dialog>
);

const Status = () => (
   <StatusBar>
      <StatusText>使用鼠标单击和拖动插入控件。</StatusText>
      <StatusTools>
         <ViewButtons>
            <ViewButton $active aria-label="普通视图"><NormalViewIcon /></ViewButton>
            <ViewButton aria-label="幻灯片浏览"><SorterIcon /></ViewButton>
            <ViewButton aria-label="幻灯片放映"><ShowIcon /></ViewButton>
         </ViewButtons>
         <ZoomValue>159%</ZoomValue>
         <IconButton aria-label="缩小"><ZoomIcon /></IconButton>
         <ZoomSlider type="range" aria-label="显示比例" min="0" max="100" defaultValue="58" />
         <IconButton aria-label="放大"><ZoomIcon plus /></IconButton>
         <FitButton aria-label="适应窗口"><FitIcon /></FitButton>
      </StatusTools>
   </StatusBar>
);

const App = () => {
   return (
      <Window>
         <GlobalStyle />
         <Header />
         <Workspace>
            <Outline />
            <Splitter />
            <SlideEditor />
         </Workspace>
         <Status />
         <Watermark>CSDN @我的天呐@-@</Watermark>
         <ControlsDialog />
      </Window>
   );
};

export default App;
